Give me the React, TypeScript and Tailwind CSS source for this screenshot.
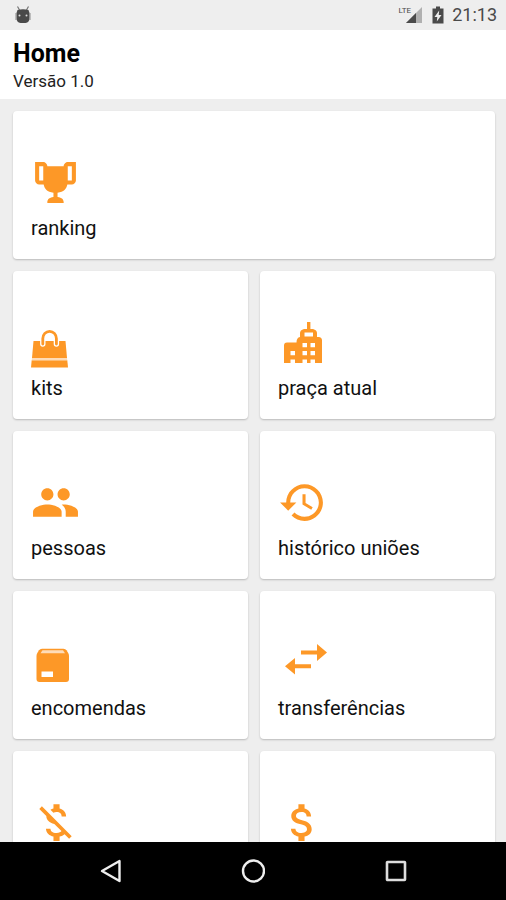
import React from 'react';

const iconClass = 'block size-[49px] shrink-0 overflow-visible fill-[#fd9827]';

const TrophyIcon: React.FC = () => (
  <svg className={iconClass} viewBox="0 0 24 24" aria-hidden="true">
    <path d="M20.2,2H19.5H18C17.1,2 16,3 16,4H8C8,3 6.9,2 6,2H4.5H3.8H2V11C2,12 3,13 4,13H6.2C6.6,15 7.9,16.7 11,17V19.1C8.8,19.3 8,20.4 8,21.7V22H16V21.7C16,20.4 15.2,19.3 13,19.1V17C16.1,16.7 17.4,15 17.8,13H20C21,13 22,12 22,11V2H20.2M4,11V4H6V11H4M20,11H18V4H20V11Z" />
  </svg>
);

const BagIcon: React.FC = () => (
  <svg className={iconClass} viewBox="0 0 49 49" aria-hidden="true">
    <path d="M2.5 23H34.5L36 40H1Z" />
    <path d="M0.7 42.3H36.3L37 49.5H0Z" />
    <path d="M1 40H36L36.3 42.3H0.7Z" fill="#fedcb8" />
    <path d="M11.8 26V20.5a6.8 7.2 0 0 1 13.6 0V26" fill="none" stroke="#fff" strokeWidth="5.4" strokeLinecap="round" />
    <path d="M11.8 26V20.5a6.8 7.2 0 0 1 13.6 0V26" fill="none" stroke="#fd9827" strokeWidth="2.8" strokeLinecap="round" />
  </svg>
);

const CityIcon: React.FC = () => (
  <svg className={iconClass} viewBox="0 0 49 49" aria-hidden="true">
    <path
      fillRule="evenodd"
      d="M29 4h3.4v7H35q4 1 4 4v4h1.5q3.5 0 3.5 3.500V45h-7v-3.500h-4.500v3.500H29v-3.500h-4.500v3.500H17v-3.500h-4.500v3.500H6V27.500q0-3 3-3h9.500q0-5 3.500-5.500v-4q0-3 4-4h3ZM26.500 14.600v3.800h8.500v-3.800ZM24.500 25v4.300H29V25ZM32.500 25v4.300H37V25ZM12.500 33v4.300H17V33ZM24.500 33v4.300H29V33ZM32.500 33v4.300H37V33Z"
    />
  </svg>
);

const PeopleIcon: React.FC = () => (
  <svg className={iconClass} viewBox="0 0 24 24" aria-hidden="true">
    <path d="M16 11c1.66 0 2.99-1.34 2.99-3S17.66 5 16 5s-3 1.34-3 3 1.34 3 3 3zm-8 0c1.66 0 2.99-1.34 2.99-3S9.66 5 8 5 5 6.34 5 8s1.34 3 3 3zm0 2c-2.33 0-7 1.17-7 3.5V19h14v-2.5c0-2.33-4.67-3.5-7-3.5zm8 0c-.29 0-.62.02-.97.05 1.16.84 1.97 1.97 1.97 3.45V19h6v-2.5c0-2.33-4.67-3.5-7-3.5z" />
  </svg>
);

const HistoryIcon: React.FC = () => (
  <svg className={iconClass} viewBox="0 0 24 24" aria-hidden="true">
    <path d="M13 3c-4.97 0-9 4.03-9 9H1l3.89 3.89.07.14L9 12H6c0-3.87 3.13-7 7-7s7 3.13 7 7-3.13 7-7 7c-1.93 0-3.68-.79-4.94-2.06l-1.42 1.42C8.27 19.99 10.51 21 13 21c4.97 0 9-4.03 9-9s-4.03-9-9-9zm-1 5v5l4.28 2.54.72-1.21-3.5-2.08V8H12z" />
  </svg>
);

const PackageIcon: React.FC = () => (
  <svg className={iconClass} viewBox="0 0 49 49" aria-hidden="true">
    <path d="M11 10.8h21.5q2 0 3 1.5l1.700 2.700q.8 1.300.8 3V41a3 3 0 0 1-3 3H8.500a3 3 0 0 1-3-3V18q0-1.700.8-3l1.700-2.700q1-1.500 3-1.500Z" />
    <path d="M11.500 12.300h20.500l2 3H9.500Z" fill="#fedcb8" />
    <path d="M10.500 33.500h11.500v5.500h-11.500Z" fill="#fff" />
  </svg>
);

const TransferIcon: React.FC = () => (
  <svg className={iconClass} viewBox="0 0 49 49" aria-hidden="true">
    <path d="M23 12.500H39V6L49 14.500L39 23V16.500H23Z" />
    <path d="M33 26.300H17V20L7 28.300L17 36.500V30.300H33Z" />
  </svg>
);

const MoneyOffIcon: React.FC = () => (
  <svg className={iconClass} viewBox="0 0 24 24" aria-hidden="true">
    <path d="M12.5 6.9c1.78 0 2.44.85 2.5 2.1h2.21c-.07-1.72-1.12-3.3-3.21-3.81V3h-3v2.16c-.53.12-1.03.3-1.48.54l1.47 1.47c.41-.17.91-.27 1.51-.27zM5.33 4.06L4.06 5.33 7.5 8.77c0 2.08 1.56 3.21 3.91 3.91l3.51 3.51c-.34.48-1.05.91-2.42.91-2.06 0-2.87-.92-2.98-2.1h-2.2c.12 2.19 1.76 3.42 3.68 3.83V21h3v-2.15c.96-.18 1.82-.55 2.45-1.12l2.22 2.22 1.27-1.27L5.33 4.06z" />
  </svg>
);

const MoneyIcon: React.FC = () => (
  <svg className={iconClass} viewBox="0 0 24 24" aria-hidden="true">
    <path d="M11.8 10.9c-2.27-.59-3-1.2-3-2.15 0-1.09 1.01-1.85 2.7-1.85 1.78 0 2.44.85 2.5 2.1h2.21c-.07-1.72-1.12-3.3-3.21-3.81V3h-3v2.16c-1.94.42-3.5 1.68-3.5 3.61 0 2.31 1.91 3.46 4.7 4.13 2.5.6 3 1.48 3 2.41 0 .69-.49 1.79-2.7 1.79-2.06 0-2.87-.92-2.98-2.1h-2.2c.12 2.19 1.76 3.42 3.68 3.83V21h3v-2.15c1.95-.37 3.5-1.5 3.5-3.55 0-2.84-2.43-3.81-4.7-4.4z" />
  </svg>
);

const StatusBar: React.FC = () => (
  <div className="flex h-[30px] shrink-0 items-center justify-between bg-[#eeeeee] pl-[15px] pr-[9px] text-[#4a4a4a]">
    <svg className="block h-[18px] w-4" viewBox="0 0 16 18" aria-hidden="true">
      <path d="M2.5 0.5L4.5 4M13.5 0.5L11.5 4" stroke="#777" strokeWidth="1.2" />
      <path d="M2.5 4Q8 2.5 13.5 4L14.5 7V12Q14.5 16.5 10.5 17H5.5Q1.5 16.5 1.5 12V7Z" fill="#4a4a4a" />
      <path d="M0.5 7h1v7h-1ZM14.5 7h1v7h-1Z" fill="#8a8a8a" />
      <circle cx="4.5" cy="9.5" r="1" fill="#ddd" />
      <circle cx="11.5" cy="9.5" r="1" fill="#ddd" />
    </svg>
    <div className="flex items-center">
      <div className="flex items-start">
        <span className="-mr-1.5 text-[8px] leading-[10px]">LTE</span>
        <svg className="block size-[18px]" viewBox="0 0 18 18" aria-hidden="true">
          <path d="M17 1V17H1Z" fill="#b0b0b0" />
          <path d="M11 7V17H1Z" fill="#4a4a4a" />
        </svg>
      </div>
      <svg className="ml-[9px] block h-[18px] w-3" viewBox="0 0 12 18" aria-hidden="true">
        <path d="M4 0.5h4v2h3.5V17.5H0.5V2.5H4Z" fill="#4a4a4a" />
        <path d="M7.2 4.5L2.5 11H5.3L4.8 15.5L9.5 9H6.7Z" fill="#eee" />
      </svg>
      <span className="ml-2 text-[18px] leading-5">21:13</span>
    </div>
  </div>
);

const NavBar: React.FC = () => (
  <nav className="flex h-[58px] shrink-0 items-center justify-center gap-[119px] bg-black">
    <button type="button" aria-label="Voltar">
      <svg className="block size-6" viewBox="0 0 24 24" aria-hidden="true">
        <path d="M21.5 2V22L4 12Z" fill="none" stroke="#eee" strokeWidth="2.4" strokeLinejoin="round" />
      </svg>
    </button>
    <button type="button" aria-label="Início">
      <svg className="block size-6" viewBox="0 0 24 24" aria-hidden="true">
        <circle cx="12.5" cy="12" r="10.5" fill="none" stroke="#eee" strokeWidth="2.4" />
      </svg>
    </button>
    <button type="button" aria-label="Recentes">
      <svg className="block size-6" viewBox="0 0 24 24" aria-hidden="true">
        <rect x="3" y="3" width="18" height="18" rx="0.5" fill="none" stroke="#ddd" strokeWidth="2.6" />
      </svg>
    </button>
  </nav>
);

const App: React.FC = () => {
  const items = [
    { icon: <TrophyIcon />, title: 'ranking', wide: true },
    { icon: <BagIcon />, title: 'kits' },
    { icon: <CityIcon />, title: 'praça atual' },
    { icon: <PeopleIcon />, title: 'pessoas' },
    { icon: <HistoryIcon />, title: 'histórico uniões' },
    { icon: <PackageIcon />, title: 'encomendas' },
    { icon: <TransferIcon />, title: 'transferências' },
    { icon: <MoneyOffIcon />, label: 'Sem pagamento' },
    { icon: <MoneyIcon />, label: 'Pagamento' }
  ];

  return (
    <div className="flex h-screen flex-col bg-[#eeeeee] font-['Roboto',sans-serif]">
      <StatusBar />

      {/* Header */}
      <header className="shrink-0 bg-white px-[13px] pt-2 pb-[7px] text-black">
        <h1 className="text-[25px] leading-8 font-bold">Home</h1>
        <p className="text-[17px] leading-[22px] text-[#222]">Versão 1.0</p>
      </header>

      {/* Menu Grid */}
      <main className="min-h-0 flex-1 overflow-hidden pt-3 pr-[11px] pl-[13px]">
        <div className="grid grid-cols-2 gap-3">
          {items.map((item, index) => (
            <button
              key={index}
              type="button"
              aria-label={item.label}
              className={`flex h-[148px] flex-col items-start rounded-[4px] bg-white pt-[47px] pl-[18px] text-left shadow-[0_1px_2px_rgba(0,0,0,0.22)] ${item.wide ? 'col-span-2' : ''}`}
            >
              {item.icon}
              <span className="mt-[9px] text-[20px] leading-6 text-[#111]">{item.title}</span>
            </button>
          ))}
        </div>
      </main>

      <NavBar />
    </div>
  );
};

export default App;
